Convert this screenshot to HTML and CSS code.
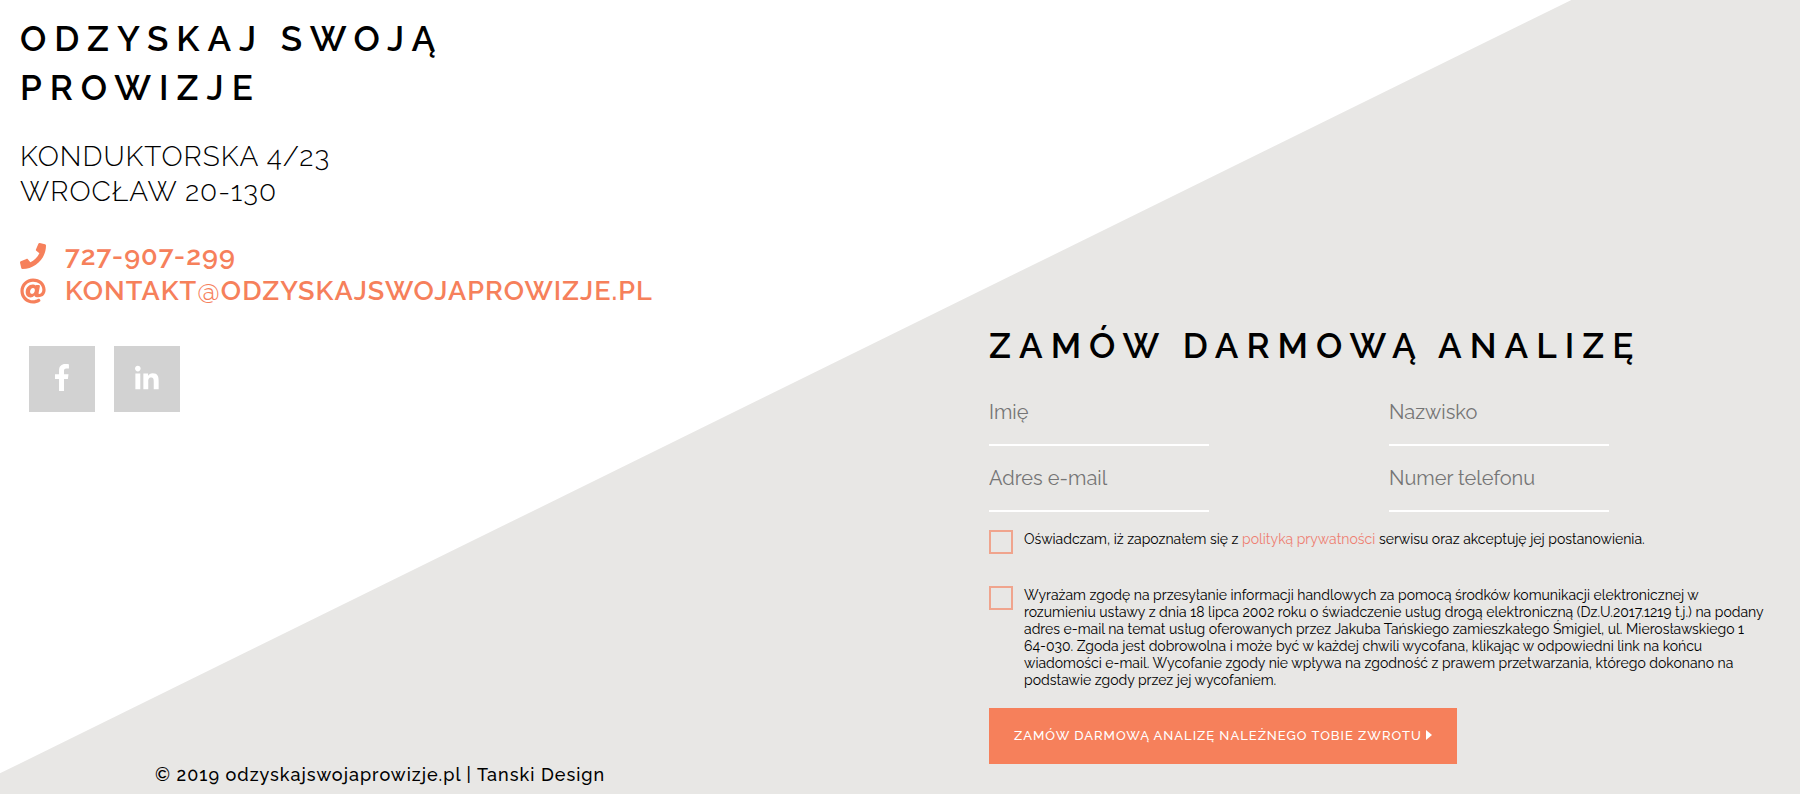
FILE: index.html
```html
<!DOCTYPE html>
<html lang="pl">
<head>
<meta charset="utf-8">
<meta name="viewport" content="width=device-width, initial-scale=1">
<title>Odzyskaj swoją prowizje</title>
<link rel="stylesheet" href="styles.css">
</head>
<body>
<main class="contact">
  <section class="company">
    <h2 class="title">Odzyskaj swoją<br>prowizje</h2>
    <address class="address">Konduktorska 4/23<br>Wrocław 20-130</address>
    <ul class="links">
      <li><a class="link" href="tel:727907299">
        <svg class="link-icon" viewBox="0 0 512 512" aria-hidden="true"><path d="M493.4 24.6l-104-24c-11.3-2.6-22.9 3.3-27.5 13.9l-48 112c-4.2 9.8-1.4 21.3 6.9 28l60.6 49.6c-36 76.7-98.9 140.5-177.2 177.2l-49.6-60.6c-6.8-8.3-18.2-11.1-28-6.9l-112 48C3.9 366.5-2 378.1.6 389.4l24 104C27.1 504.2 36.7 512 48 512c256.1 0 464-207.5 464-464 0-11.2-7.7-20.9-18.6-23.4z"/></svg>
        <span>727-907-299</span></a></li>
      <li><a class="link" href="mailto:kontakt@odzyskajswojaprowizje.pl">
        <svg class="link-icon" viewBox="0 0 512 512" aria-hidden="true"><path d="M256 8C118.941 8 8 118.919 8 256c0 137.059 110.919 248 248 248 48.154 0 95.342-14.14 135.408-40.223 12.005-7.815 14.625-24.288 5.552-35.372l-10.177-12.433c-7.671-9.371-21.179-11.667-31.373-5.129C325.92 429.757 291.314 440 256 440c-101.458 0-184-82.542-184-184S154.542 72 256 72c100.139 0 184 57.619 184 160 0 38.786-21.093 79.742-58.17 83.693-17.349-.454-16.91-12.857-13.476-30.024l23.433-121.11C394.653 149.75 383.308 136 368.225 136h-44.981a13.518 13.518 0 0 0-13.432 11.993l-.01.092c-14.697-17.901-40.448-21.775-59.971-21.775-74.58 0-137.831 62.234-137.831 151.46 0 65.303 36.785 105.87 96 105.87 26.984 0 57.369-15.637 74.991-38.333 9.522 34.104 40.613 34.104 70.671 34.104C462.609 379.41 504 307.798 504 232 504 95.653 394.023 8 256 8zm-21.68 304.43c-22.249 0-36.07-15.623-36.07-40.771 0-44.993 30.779-72.729 58.63-72.729 22.292 0 35.601 15.241 35.601 40.77 0 45.061-33.875 72.73-58.161 72.73z"/></svg>
        <span>kontakt<span class="at">@</span>odzyskajswojaprowizje.pl</span></a></li>
    </ul>
    <div class="social">
      <a class="social-link" href="#" aria-label="Facebook"><svg class="social-icon" viewBox="0 0 264 512" aria-hidden="true"><path d="M76.7 512V283H0v-91h76.7v-71.7C76.7 42.4 124.3 0 193.8 0c33.3 0 61.9 2.5 70.2 3.6V85h-48.2c-37.8 0-45.1 18-45.1 44.3V192H256l-11.7 91h-73.6v229"/></svg></a>
      <a class="social-link" href="#" aria-label="LinkedIn"><svg class="social-icon" viewBox="0 0 448 512" aria-hidden="true"><path d="M100.3 480H7.4V180.9h92.9V480zM53.8 140.1C24.1 140.1 0 115.5 0 85.8 0 56.1 24.1 32 53.8 32c29.7 0 53.8 24.1 53.8 53.8 0 29.7-24.1 54.3-53.8 54.3zM448 480h-92.7V334.4c0-34.7-.7-79.2-48.3-79.2-48.3 0-55.7 37.7-55.7 76.7V480h-92.8V180.9h89.1v40.8h1.3c12.4-23.5 42.7-48.3 88-48.3 94.1 0 111.3 61.9 111.3 142.3V480z"/></svg></a>
    </div>
    <footer class="copyright">© 2019 odzyskajswojaprowizje.pl | Tanski Design</footer>
  </section>

  <section class="order">
    <h2 class="title">Zamów darmową analizę</h2>
    <form class="form">
      <div class="fields">
        <input class="field" type="text" placeholder="Imię" aria-label="Imię">
        <input class="field" type="text" placeholder="Nazwisko" aria-label="Nazwisko">
        <input class="field" type="email" placeholder="Adres e-mail" aria-label="Adres e-mail">
        <input class="field" type="tel" placeholder="Numer telefonu" aria-label="Numer telefonu">
      </div>
      <div class="consent">
        <input class="check" type="checkbox" id="privacy">
        <label class="consent-text" for="privacy">Oświadczam, iż zapoznałem się z <a class="policy" href="#">polityką prywatności</a> serwisu oraz akceptuję jej postanowienia.</label>
      </div>
      <div class="consent">
        <input class="check" type="checkbox" id="marketing">
        <label class="consent-text" for="marketing">Wyrażam zgodę na przesyłanie informacji handlowych za pomocą środków komunikacji elektronicznej w<br>
        rozumieniu ustawy z dnia 18 lipca 2002 roku o świadczenie usług drogą elektroniczną (Dz.U.2017.1219 t.j.) na podany<br>
        adres e-mail na temat usług oferowanych przez Jakuba Tańskiego zamieszkałego Śmigiel, ul. Mierosławskiego 1<br>
        64-030. Zgoda jest dobrowolna i może być w każdej chwili wycofana, klikając w odpowiedni link na końcu<br>
        wiadomości e-mail. Wycofanie zgody nie wpływa na zgodność z prawem przetwarzania, którego dokonano na<br>
        podstawie zgody przez jej wycofaniem.</label>
      </div>
      <button class="submit" type="submit">Zamów darmową analizę należnego Tobie zwrotu
        <svg class="caret" viewBox="0 0 6 10" aria-hidden="true"><path d="M0 0l6 5-6 5z"/></svg></button>
    </form>
  </section>
</main>
</body>
</html>
```
FILE: styles.css
```css
* {
  box-sizing: border-box;
}

body {
  margin: 0;
  font-family: Raleway, Lato, "Open Sans", sans-serif;
  color: #000;
  background: #fff;
}

.contact {
  position: relative;
  display: grid;
  grid-template-columns: 55fr 45fr;
  min-height: 100vh;
}

/* Grey area below the diagonal */
.contact::before {
  content: "";
  position: absolute;
  inset: 0;
  z-index: -1;
  background: #e8e7e5;
  clip-path: polygon(0 97.4%, 87.3% 0, 100% 0, 100% 100%, 0 100%);
}

.company {
  display: flex;
  flex-direction: column;
  padding: 14px 20px 6px;
}

.title {
  margin: 0;
  font-size: 35px;
  line-height: 49px;
  font-weight: 600;
  letter-spacing: 8px;
  text-transform: uppercase;
}

.address {
  margin-top: 27px;
  font-size: 28px;
  line-height: 35px;
  font-style: normal;
  font-weight: 300;
  letter-spacing: 1px;
  text-transform: uppercase;
}

.links {
  margin: 29px 0 0;
  padding: 0;
  list-style: none;
}

.link {
  display: flex;
  align-items: center;
  gap: 19px;
  color: #f6805b;
  font-size: 27px;
  line-height: 35px;
  font-weight: 600;
  letter-spacing: 1px;
  text-decoration: none;
  text-transform: uppercase;
}

.link-icon {
  width: 26px;
  height: 26px;
  fill: currentColor;
}

.at {
  font-weight: 400;
}

.social {
  display: flex;
  gap: 19px;
  margin: 38px 0 0 9px;
}

.social-link {
  display: flex;
  justify-content: center;
  width: 66px;
  height: 66px;
  padding-top: 18px;
  background: #d2d2d2;
}

.social-icon {
  height: 27px;
  fill: #fff;
}

.copyright {
  margin-top: auto;
  padding-left: 135px;
  font-size: 18px;
  line-height: 26px;
  font-weight: 500;
  letter-spacing: 1px;
}

.order {
  display: flex;
  flex-direction: column;
  justify-content: flex-end;
  margin-left: -1px;
  padding: 0 11px 30px 0;
}

.fields {
  display: grid;
  grid-template-columns: 1fr 1fr;
  row-gap: 16px;
  margin-top: 26px;
}

.field {
  width: 55%;
  height: 50px;
  padding: 0 0 16px;
  border: 0;
  border-bottom: 2px solid #fff;
  background: transparent;
  font: inherit;
  font-size: 20px;
}

.field::placeholder {
  color: #757575;
  opacity: 1;
}

.consent {
  display: flex;
  align-items: flex-start;
  gap: 11px;
  min-height: 38px;
  margin-top: 18px;
}

.consent-text {
  padding-top: 1px;
  font-size: 14px;
  line-height: 17px;
}

.check {
  flex: none;
  appearance: none;
  width: 24px;
  height: 24px;
  margin: 0;
  border: 2px solid #f0a48d;
}

.check:checked {
  background: #f6805b;
}

.policy {
  color: #ee7f72;
  text-decoration: none;
}

.submit {
  margin-top: 19px;
  padding: 0 25px;
  border: 0;
  background: #f6805b;
  color: #fff;
  font: inherit;
  font-size: 13px;
  font-weight: 500;
  line-height: 56px;
  letter-spacing: 1px;
  text-transform: uppercase;
}

.caret {
  width: 6px;
  height: 10px;
  fill: currentColor;
}
```
